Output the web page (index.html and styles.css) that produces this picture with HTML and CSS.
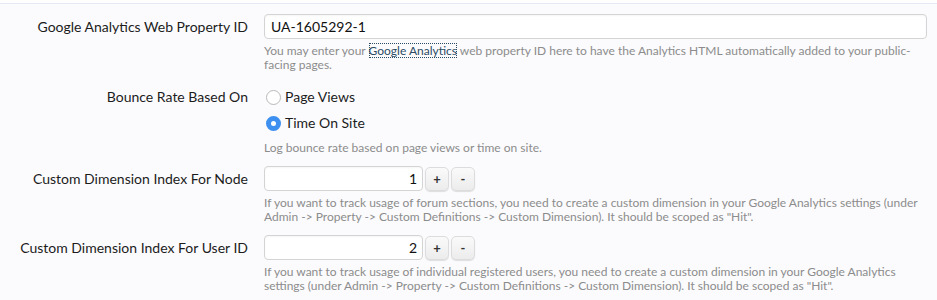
FILE: index.html
```html
<!DOCTYPE html>
<html lang="en">
<head>
    <meta charset="UTF-8">
    <title>Google Analytics Options</title>
    <link rel="stylesheet" href="styles.css">
</head>
<body>
    <div class="options">
        <dl class="ctrl-unit">
            <dt><label for="ga-id">Google Analytics Web Property ID</label></dt>
            <dd>
                <input type="text" id="ga-id" class="text-ctrl" value="UA-1605292-1">
                <p class="explain">You may enter your <a href="#" class="focused">Google Analytics</a> web property ID here to have the Analytics HTML automatically added to your public-facing pages.</p>
            </dd>
        </dl>

        <dl class="ctrl-unit">
            <dt class="radio-label"><label>Bounce Rate Based On</label></dt>
            <dd>
                <ul class="radio-list">
                    <li><label><input type="radio" name="bounce" value="views"> Page Views</label></li>
                    <li><label><input type="radio" name="bounce" value="time" checked> Time On Site</label></li>
                </ul>
                <p class="explain after-radio">Log bounce rate based on page views or time on site.</p>
            </dd>
        </dl>

        <dl class="ctrl-unit">
            <dt><label for="dim-node">Custom Dimension Index For Node</label></dt>
            <dd>
                <div class="spin-box">
                    <input type="text" id="dim-node" class="text-ctrl number" value="1">
                    <button type="button" class="spin-btn">+</button>
                    <button type="button" class="spin-btn">-</button>
                </div>
                <p class="explain">If you want to track usage of forum sections, you need to create a custom dimension in your Google Analytics settings (under Admin -&gt; Property -&gt; Custom Definitions -&gt; Custom Dimension). It should be scoped as "Hit".</p>
            </dd>
        </dl>

        <dl class="ctrl-unit">
            <dt><label for="dim-user">Custom Dimension Index For User ID</label></dt>
            <dd>
                <div class="spin-box">
                    <input type="text" id="dim-user" class="text-ctrl number" value="2">
                    <button type="button" class="spin-btn">+</button>
                    <button type="button" class="spin-btn">-</button>
                </div>
                <p class="explain">If you want to track usage of individual registered users, you need to create a custom dimension in your Google Analytics settings (under Admin -&gt; Property -&gt; Custom Definitions -&gt; Custom Dimension). It should be scoped as "Hit".</p>
            </dd>
        </dl>
    </div>
</body>
</html>
```

FILE: styles.css
```css
body {
    margin: 0;
    padding-top: 3px;
    background-color: #ffffff;
    font-family: Lato, "Liberation Sans", sans-serif;
    color: #1c1c1c;
}
.options {
    border-top: 1px solid #e3eaf3;
    background-color: #fbfbfd;
    padding: 10px 10px 20px 0;
    min-height: 300px;
}
.ctrl-unit {
    display: grid;
    grid-template-columns: 248px 1fr;
    column-gap: 16px;
    margin: 0 0 11px 0;
}
.ctrl-unit dt {
    text-align: right;
    font-size: 14px;
    line-height: 24px;
    padding-top: 1px;
}
.ctrl-unit dt.radio-label {
    padding-top: 2px;
}
.ctrl-unit dd {
    margin: 0;
}
.text-ctrl {
    display: block;
    width: 100%;
    height: 25px;
    box-sizing: border-box;
    padding: 2px 6px;
    border: 1px solid #d4d4d4;
    border-radius: 4px;
    background: #fff;
    box-shadow: inset 0 1px 2px rgba(0,0,0,0.04);
    font-family: inherit;
    font-size: 14px;
    color: #111;
}
.explain {
    margin: 5px 0 0 0;
    font-size: 12px;
    line-height: 14px;
    color: #8c8c8c;
}
.explain.after-radio {
    margin-top: 4px;
}
.explain a {
    color: #2b4b63;
    text-decoration: none;
}
.explain a.focused {
    outline: 1px dotted #2b4b63;
    outline-offset: -1px;
}
.radio-list {
    list-style: none;
    margin: 2px 0 0 0;
    padding: 0;
    font-size: 14px;
}
.radio-list li {
    height: 26px;
    line-height: 24px;
}
.radio-list label {
    display: flex;
    align-items: center;
    gap: 4px;
}
.radio-list input {
    appearance: none;
    -webkit-appearance: none;
    width: 15px;
    height: 15px;
    margin: 0 0 0 2px;
    border: 1px solid #b9b9b9;
    border-radius: 50%;
    background: #fff;
    box-sizing: border-box;
}
.radio-list input:checked {
    border: 5px solid #3d8ff0;
    background: #fff;
}
.spin-box {
    display: flex;
    align-items: center;
    gap: 2px;
}
.text-ctrl.number {
    width: 159px;
    text-align: right;
    padding-right: 5px;
}
.spin-btn {
    width: 24px;
    height: 24px;
    padding: 0;
    border: 1px solid #dcdcdc;
    border-radius: 5px;
    background: linear-gradient(#fafafa, #ececec);
    box-shadow: 0 1px 1px rgba(0,0,0,0.12);
    font-family: inherit;
    font-size: 13px;
    font-weight: bold;
    color: #333;
    cursor: pointer;
}
```
